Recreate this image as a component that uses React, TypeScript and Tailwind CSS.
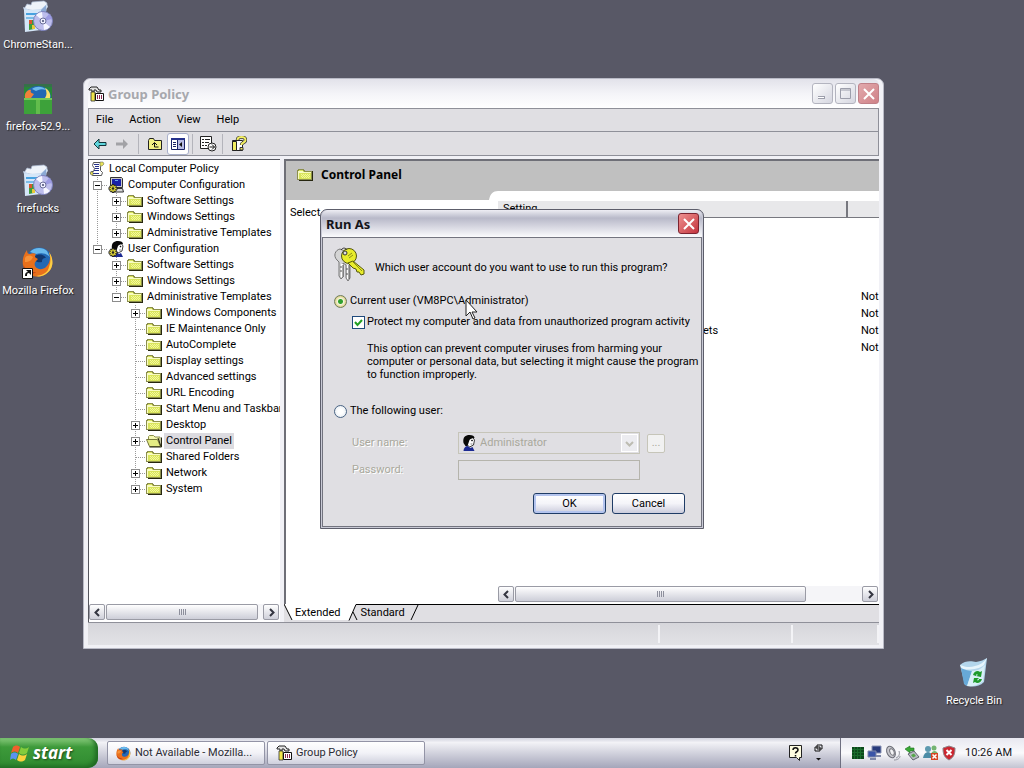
import React, { useState } from 'react';

interface TreeNode {
  label: string;
  icon: React.FC;
  selected?: boolean;
  closed?: boolean;
  children?: TreeNode[];
}

const Folder = () => (
  <svg width="16" height="16" viewBox="0 0 16 16" shapeRendering="crispEdges" className="shrink-0">
    <path d="M2 14h14V4h-1v9H2z" fill="#26260f" />
    <path d="M0 4l1-2h5l2 2h7v9H0z" fill="#8c8f4c" />
    <path d="M1 4l1-1h4l1 2h7v7H1z" fill="#d9e45c" />
    <path d="M1 4h5v1h8v1H2v6H1z" fill="#f8fbc2" />
    <path d="M4 7h1v1H4zM6 7h1v1H6zM8 7h1v1H8zM10 7h1v1h-1zM12 7h1v1h-1zM5 8h1v1H5zM7 8h1v1H7zM9 8h1v1H9zM11 8h1v1h-1zM4 9h1v1H4zM6 9h1v1H6zM8 9h1v1H8zM10 9h1v1h-1zM12 9h1v1h-1zM5 10h1v1H5zM7 10h1v1H7zM9 10h1v1H9zM11 10h1v1h-1z" fill="#f3f99a" />
  </svg>
);

const OpenFolder = () => (
  <svg width="16" height="16" viewBox="0 0 16 16" className="shrink-0">
    <path d="M2.500 12V3.500l1-1h4l1.500 1.500h5v9" fill="#f4f8b0" stroke="#8c8f4c" />
    <path d="M.500 6.500h11l3 7h-11z" fill="#e4ec84" stroke="#77793c" />
    <path d="M12 5l3 8.500M3.500 14H15.500V4.500" fill="none" stroke="#26260f" />
  </svg>
);

const Scroll = () => (
  <svg width="16" height="16" viewBox="0 0 16 16" className="shrink-0">
    <path d="M4.500 1.500h8l1 2-2 2v4l2 2-1 3h-9l-2-2 1-2h2l1-3-2-3z" fill="#fff" stroke="#555" />
    <path d="M5 3.500h5M6 5.500h4M6 7.500h4M5 9.500h5M4 12.500h6" stroke="#26328c" />
    <path d="M11 1h3l1 2-2 2h-2zM1 11h3v3H2z" fill="#e9e458" stroke="#555" strokeWidth=".5" />
  </svg>
);

const Gear = () => (
  <>
    <path d="M5 7v9M.500 11.500h9M2 8.500l6 6M8 8.500l-6 6" stroke="#222" strokeWidth="2.500" />
    <path d="M5 8v7M1.500 11.500h7M2.500 9l5 5M7.500 9l-5 5" stroke="#e5dc3a" strokeWidth="1.300" />
    <circle cx="5" cy="11.500" r="1.300" fill="#222" />
  </>
);

const Computer = () => (
  <svg width="16" height="16" viewBox="0 0 16 16" className="shrink-0">
    <path d="M2.500 .500h11l1 1v9h-12z" fill="#c8c8c8" stroke="#333" />
    <path d="M4 2h9v7H4z" fill="#1820a8" />
    <path d="M7 3h3v1H7z" fill="#6aa8f0" />
    <path d="M3.500 11.500h11l1 3.500h-11z" fill="#d8d8d8" stroke="#333" />
    <Gear />
  </svg>
);

const PersonPaths = () => (
  <>
    <path d="M7 3l6-1 2 3-1 5-4 2-3-3z" fill="#fff" stroke="#111" strokeWidth=".8" />
    <path d="M4 8C3 2 6 0 10 0c3 0 5 1 5 3-3 0-4 1-5 2L9 8l-1 3H6z" fill="#080808" />
    <path d="M4 16c0-3 2-5 4-5l3 2 2-1 2 4z" fill="#1c2a92" />
    <path d="M12 5h1v1h-1zM11 9h2" fill="#111" stroke="#111" strokeWidth=".5" />
  </>
);

const UserGear = () => (
  <svg width="16" height="16" viewBox="0 0 16 16" className="shrink-0">
    <PersonPaths />
    <Gear />
  </svg>
);

const Person = () => (
  <svg width="14" height="16" viewBox="3 0 13 16" className="shrink-0">
    <PersonPaths />
  </svg>
);

const PolicyIcon = () => (
  <svg width="16" height="16" viewBox="0 0 16 16" className="shrink-0">
    <path d="M1 3l2-2h6l2 3h2v2H9L8 4H6v2H4V4H1z" fill="#e4e4e4" stroke="#222" />
    <path d="M3 6h4v9H3z" fill="#f1e64a" stroke="#333" strokeWidth=".8" />
    <path d="M7.500 7.500h8v7h-8z" fill="#fff" stroke="#111" />
    <path d="M9.500 9v4M11.500 9v4M13.500 9v4" stroke="#8c2850" />
  </svg>
);

const Firefox = ({ size }: { size: number }) => (
  <svg width={size} height={size} viewBox="0 0 32 32" className="shrink-0">
    <circle cx="17" cy="15" r="13.500" fill="#2268b4" />
    <path d="M8 6c4-5 13-5 17-1l3 6c-5-5-10-4-14-3z" fill="#69b9ec" />
    <path d="M12 11c4-4 10-3 12 1-3 0-4 1-4 4-4 1-7 0-8-5z" fill="#12386f" />
    <path d="M27 6c5 7 5 17-3 22-9 6-21 1-23-9C0 13 2 8 5 4c0 3 1 4 3 4 2-1 4-1 6 0-2 2-1 4 2 5-3 3-4 4-3 7 2 4 8 4 11 1 4-4 5-9 3-15z" fill="#e8701c" />
    <path d="M27 6c5 7 5 17-3 22-3 2-7 3-10 2 8-1 12-4 13-9 2-5 2-10 0-15z" fill="#fbd044" />
    <path d="M3 12c2-3 5-3 8-1-1 3-4 5-8 5z" fill="#f79239" />
    <path d="M1 18c2 5 7 9 13 8-3 3-8 2-11-2z" fill="#c33e18" />
  </svg>
);

const Installer = () => (
  <svg width="32" height="34" viewBox="0 0 32 34">
    <path d="M2 9l3-5 4 1 1-3 12-1 3 2-1 8-5 1z" fill="#eef3fa" stroke="#a9b8d0" strokeWidth=".7" />
    <path d="M1 7l7 3 11-1 6-5 1 3-6 6H3z" fill="#cbdcf0" />
    <path d="M2 10h17v20L3 32z" fill="#d4e6f8" />
    <path d="M19 10l5-5v22l-5 4z" fill="#8ba9d4" />
    <path d="M4 13h12v2H4z" fill="#48a2e0" />
    <path d="M4 17h8v2H4z" fill="#7cbde8" />
    <path d="M7 20h5v9l-5 1z" fill="#3f9b3b" />
    <path d="M7 20h3v4H7z" fill="#d8562c" />
    <path d="M10 25h3v4h-3z" fill="#e8c93a" />
    <circle cx="21" cy="21" r="9.500" fill="#bdbdec" stroke="#7d82bd" />
    <path d="M21 21l-7-6a9 9 0 0 1 6-3zM21 21l7 6a9 9 0 0 1-6 3z" fill="#f5f5ff" />
    <path d="M21 21l9-2a9 9 0 0 0-3-5z" fill="#9c9ae2" />
    <circle cx="21" cy="21" r="3" fill="#eef" stroke="#6b6f99" />
    <circle cx="21" cy="21" r="1" fill="#454a70" />
  </svg>
);

const FirefoxSetup = () => (
  <svg width="30" height="34" viewBox="0 0 30 34">
    <path d="M1 2h28v30H1z" fill="#278838" />
    <path d="M1 2h28v3H1z" fill="#36704a" />
    <path d="M2 16C2 8 8 4 15 4s13 4 13 12z" fill="#2268b4" />
    <path d="M9 7c4-3 11-3 14 1-5-2-8 0-10 1z" fill="#6cbbec" />
    <path d="M2 16C1 11 5 7 8 8c-1 2 0 3 3 4l-3 4z" fill="#f0813a" />
    <path d="M22 6c4 2 6 6 5 10h-5c2-3 2-6 0-10z" fill="#fbe06a" />
    <path d="M1 16h28v16H1z" fill="#3da23a" />
    <path d="M13 18h4v14h-4z" fill="#62bd4c" />
    <path d="M1 16h28v2H1z" fill="#72c858" />
  </svg>
);

const FirefoxShortcut = () => (
  <svg width="34" height="34" viewBox="0 0 34 34">
    <svg x="1" y="0" width="32" height="32"><Firefox size={32} /></svg>
    <path d="M1.500 22.500h10v10h-10z" fill="#fff" stroke="#111" />
    <path d="M4 30c0-3 1-4 3-4l-2-2h5v5l-2-2c-2 0-2 1-2 3z" fill="#111" />
  </svg>
);

const RecycleBin = () => (
  <svg width="30" height="34" viewBox="0 0 30 34">
    <path d="M1 9C6 4 13 5 17 6c5-1 8-2 11-4l-3 24c-6 6-14 5-19 3z" fill="#b3d6ec" />
    <path d="M1 9c5 2 10 3 15 1 5-1 9-4 12-8l-3 7c-6 5-16 5-22 4z" fill="#e7f5fc" />
    <path d="M2 12c4 2 8 3 11 3L8 30l-3-2z" fill="#67a9d8" />
    <path d="M13 15c6 0 10-3 13-6l-2 16c-4 4-11 6-16 5z" fill="#d9eff8" />
    <path d="M14 19c1-4 5-5 7-3l2-1-1 6-5-1 2-1c-1-1-2-1-2 1zM23 23c-1 4-5 5-7 3l-2 1 1-5 5 0-2 2c1 1 2 0 2-1z" fill="#1f9a2c" />
  </svg>
);

const Keys = () => (
  <svg width="32" height="34" viewBox="0 0 32 34" className="shrink-0">
    <path d="M6 2C1 3-1 9 3 13l2 2v14l2 3 2-2V16l3 2v13l2 3 2-3V17c3-3 1-9-3-12z" fill="#d5d5d5" stroke="#777" />
    <path d="M8 17v13M14 18v14" stroke="#fff" strokeWidth="2" />
    <path d="M9 18v12M15 18v14M6 20h2M6 24h2M12 22h2M12 27h2" stroke="#555" />
    <circle cx="15" cy="9" r="7.500" fill="#e8ec2c" stroke="#55570f" />
    <path d="M19 14l11 9v4l-3 1-2-3-2 0-1-3-3-1-5-5z" fill="#e8ec2c" stroke="#55570f" />
    <circle cx="11" cy="6" r="2" fill="#e0dfe3" stroke="#333" />
    <path d="M18 14l10 10M14 9l4-3M15 11l4-3" stroke="#8b8e16" />
    <path d="M7 3c2-3 5-2 6 0" fill="none" stroke="#333" />
  </svg>
);

const FlagLogo = () => (
  <svg width="20" height="19" viewBox="0 0 20 19">
    <path d="M3 3c2-2 5-2 7 0L8 9C6 7 4 7 1 9z" fill="#f0602c" />
    <path d="M11 3c3 2 5 2 8 0l-2 6c-3 2-5 2-8 0z" fill="#85cc3c" />
    <path d="M1 10c2-2 5-2 7 0l-2 6c-2-2-4-2-6 0z" fill="#5b93f0" />
    <path d="M9 10c3 2 5 2 8 0l-2 6c-3 2-5 2-8 0z" fill="#fbd23c" />
  </svg>
);

const Chevron = ({ d, color = '#333540' }: { d: string; color?: string }) => (
  <svg width="9" height="9" viewBox="0 0 9 9">
    <path d={d} fill="none" stroke={color} strokeWidth="2" />
  </svg>
);

const Cross = () => (
  <svg width="14" height="14" viewBox="0 0 14 14">
    <path d="M2 2l10 10M12 2L2 12" stroke="#fff" strokeWidth="2" />
  </svg>
);

const folder = (label: string, extra: Partial<TreeNode> = {}): TreeNode => ({ label, icon: Folder, ...extra });

const tree: TreeNode[] = [
  {
    label: 'Computer Configuration',
    icon: Computer,
    children: [
      folder('Software Settings', { closed: true }),
      folder('Windows Settings', { closed: true }),
      folder('Administrative Templates', { closed: true }),
    ],
  },
  {
    label: 'User Configuration',
    icon: UserGear,
    children: [
      folder('Software Settings', { closed: true }),
      folder('Windows Settings', { closed: true }),
      folder('Administrative Templates', {
        children: [
          folder('Windows Components', { closed: true }),
          folder('IE Maintenance Only'),
          folder('AutoComplete'),
          folder('Display settings'),
          folder('Advanced settings'),
          folder('URL Encoding'),
          folder('Start Menu and Taskbar'),
          folder('Desktop', { closed: true }),
          { label: 'Control Panel', icon: OpenFolder, closed: true, selected: true },
          folder('Shared Folders'),
          folder('Network', { closed: true }),
          folder('System', { closed: true }),
        ],
      }),
    ],
  },
];

const Guide = ({ line }: { line: boolean }) => (
  <svg width="19" height="16" className="shrink-0">
    {line && <path d="M8.500 0v16" stroke="#999" strokeDasharray="1 1" />}
  </svg>
);

const Branch = ({ last, sign }: { last: boolean; sign?: '+' | '-' }) => (
  <svg width="19" height="16" className="shrink-0" shapeRendering="crispEdges">
    <path d={last ? 'M8.500 0v8M9 8.500h9' : 'M8.500 0v16M9 8.500h9'} stroke="#999" strokeDasharray="1 1" />
    {sign && <rect x="4.500" y="4.500" width="8" height="8" fill="#fff" stroke="#8c8c8c" />}
    {sign && <path d={sign === '+' ? 'M6 8.500h5M8.500 6v5' : 'M6 8.500h5'} stroke="#000" />}
  </svg>
);

const TreeRows = ({ nodes, guides }: { nodes: TreeNode[]; guides: boolean[] }) => (
  <ul>
    {nodes.map((node, i) => {
      const last = i === nodes.length - 1;
      const sign = node.children ? '-' : node.closed ? '+' : undefined;
      const Icon = node.icon;
      return (
        <li key={node.label}>
          <div className="flex h-4 items-center">
            {guides.map((line, g) => <Guide key={g} line={line} />)}
            <Branch last={last} sign={sign} />
            <Icon />
            <span className={`ml-[2px] px-[2px] leading-4 whitespace-nowrap ${node.selected ? 'bg-[#dcdbe0]' : ''}`}>
              {node.label}
            </span>
          </div>
          {node.children && <TreeRows nodes={node.children} guides={[...guides, !last]} />}
        </li>
      );
    })}
  </ul>
);

const settings = [
  { id: 'prohibit', state: 'Not' },
  { id: 'hide', state: 'Not' },
  { id: 'show', name: 'ets', state: 'Not' },
  { id: 'force', state: 'Not' },
];

const ScrollBar = ({ thumb }: { thumb: string }) => {
  const arrow = 'flex size-4 shrink-0 items-center justify-center rounded-[2px] border border-[#9a9ba5] bg-linear-to-b from-white to-[#cfd0da]';
  return (
    <div className="flex h-4 gap-px bg-[#f5f5f8]">
      <button aria-label="Scroll left" className={arrow}><Chevron d="M6 1L2.500 4.500 6 8" /></button>
      <div className="flex flex-1 pr-1">
        <div className={`flex items-center justify-center gap-px rounded-[2px] border border-[#9a9ba5] bg-linear-to-b from-white to-[#cdced8] ${thumb}`}>
          {[0, 1, 2, 3].map((n) => <span key={n} className="h-[6px] w-px bg-[#8d8f9c]" />)}
        </div>
      </div>
      <button aria-label="Scroll right" className={arrow}><Chevron d="M3 1l3.500 3.500L3 8" /></button>
    </div>
  );
};

const Toolbar = () => (
  <div className="flex h-6 items-center border-b border-[#8f9099] pl-1">
    <button aria-label="Back" className="w-[22px]">
      <svg width="14" height="12" viewBox="0 0 14 12"><path d="M1 6l5-5v3.500h7v3H6V11z" fill="#5fd5dc" stroke="#12343a" /></svg>
    </button>
    <button aria-label="Forward" className="w-[22px]">
      <svg width="14" height="12" viewBox="0 0 14 12"><path d="M13 6L8 1v3.500H1v3h7V11z" fill="#a2a2a6" /></svg>
    </button>
    <div className="mr-2 ml-px h-5 w-px bg-[#b4b4bb]" />
    <button aria-label="Up one level" className="w-5">
      <svg width="16" height="14" viewBox="0 0 16 14">
        <path d="M1.500 12.500v-9l1-2h4l1 2h7v9z" fill="#f4f283" stroke="#222" />
        <path d="M7.500 10V6M5 8l2.500-2.500L10 8M7.500 10h4" fill="none" stroke="#111" />
      </svg>
    </button>
    <button aria-label="Show or hide tree" className="flex h-[22px] w-[22px] items-center justify-center rounded-[3px] border border-[#a9b0cc] bg-white">
      <svg width="14" height="12" viewBox="0 0 14 12">
        <path d="M.500 .500h13v11H.500z" fill="#fff" stroke="#1a2266" />
        <path d="M0 0h14v2H0z" fill="#26328c" />
        <path d="M7 2h6v9H7z" fill="#b8bce4" />
        <path d="M6.500 2v10M2 4.500h3M2 6.500h3M2 8.500h3" stroke="#1a2266" />
        <path d="M11 4v5L8 6.500z" fill="#111" />
      </svg>
    </button>
    <div className="mx-[3px] h-5 w-px bg-[#b4b4bb]" />
    <button aria-label="Export list" className="ml-1 w-[22px]">
      <svg width="17" height="16" viewBox="0 0 17 16">
        <path d="M.500 .500h11v12H.500z" fill="#fff" stroke="#222" />
        <path d="M2 3.500h2M5 3.500h5M2 6.500h2M5 6.500h4M2 9.500h2M5 9.500h2" stroke="#222" />
        <circle cx="12" cy="11" r="4" fill="#fff" stroke="#222" />
        <path d="M9.500 11h5M12 8.500l2.500 2.500L12 13.500" fill="none" stroke="#111" />
      </svg>
    </button>
    <div className="mr-2 h-5 w-px bg-[#b4b4bb]" />
    <button aria-label="Help" className="w-[22px]">
      <svg width="16" height="16" viewBox="0 0 16 16">
        <path d="M1.500 4.500h10v10h-10z" fill="#fff" stroke="#222" />
        <path d="M1.500 5.500h4v9h-4z" fill="#f2ee62" stroke="#222" />
        <path d="M6.500 4c0-4 8-4 8 0 0 3-4 2-4 5" fill="none" stroke="#333" strokeWidth="3.500" />
        <path d="M6.500 4c0-4 8-4 8 0 0 3-4 2-4 5" fill="none" stroke="#f2ee62" strokeWidth="2" />
        <path d="M9 11.500h3v2.500H9z" fill="#f2ee62" stroke="#333" />
      </svg>
    </button>
  </div>
);

const GroupPolicyWindow = () => {
  const titleButton = 'flex size-[21px] items-center justify-center rounded-[3px] border border-[#b3b4bf] bg-linear-to-br from-white to-[#d5d6e0]';
  return (
    <section className="absolute top-[78px] left-[83px] flex h-[571px] w-[801px] flex-col rounded-t-[7px] border border-[#b9bac6] bg-[#f1f1f6] px-1 pb-[3px]">
      <header className="flex h-[29px] shrink-0 items-center gap-1 rounded-t-[6px] bg-linear-to-b from-[#e2e2ea] via-[#f4f4f8] to-white">
        <PolicyIcon />
        <h1 className="font-['Noto_Sans',sans-serif] text-[13px] font-bold text-[#a7a8ad]">Group Policy</h1>
        <div className="ml-auto flex gap-[2px]">
          <button aria-label="Minimize" className={titleButton}>
            <svg width="13" height="13"><path d="M2 10.500h7" stroke="#9c9eab" strokeWidth="3" /><path d="M2 10.500h6" stroke="#fff" /></svg>
          </button>
          <button aria-label="Maximize" className={titleButton}>
            <svg width="13" height="13"><path d="M1.500 1.500h10v10h-10zM1 3h11" fill="none" stroke="#9c9eab" /></svg>
          </button>
          <button aria-label="Close" className="flex size-[21px] items-center justify-center rounded-[3px] border border-[#c08088] bg-linear-to-br from-[#e2a9ad] to-[#cf8288]"><Cross /></button>
        </div>
      </header>

      <div className="shrink-0 border border-b-0 border-[#8f9099] bg-[#e0dfe3]">
        <nav className="flex h-[23px] items-center gap-4 border-b border-[#8f9099] pl-[7px]">
          {['File', 'Action', 'View', 'Help'].map((m) => <button key={m}>{m}</button>)}
        </nav>
        <Toolbar />
      </div>

      <div className="mt-[3px] flex min-h-0 flex-1 gap-1 border-b border-[#8f9099] bg-[#f1f1f6]">
        <div className="flex w-48 shrink-0 flex-col overflow-hidden border-t border-l border-[#55565e] bg-white pt-px">
          <div className="flex h-4 items-center">
            <Scroll />
            <span className="ml-[2px] px-[2px] leading-4">Local Computer Policy</span>
          </div>
          <TreeRows nodes={tree} guides={[]} />
          <div className="mt-auto pr-px pb-[2px]">
            <ScrollBar thumb="flex-1" />
          </div>
        </div>

        <div className="flex min-w-0 flex-1 flex-col bg-[#e0dfe3]">
          <div className="flex min-h-0 flex-1 flex-col border-t-2 border-l-2 border-[#6e6f77] bg-white">
            <div className="flex h-[30px] shrink-0 items-center gap-2 bg-[#c0c0c0] pb-[2px] pl-[11px]">
              <Folder />
              <h2 className="font-['Noto_Sans',sans-serif] text-[12px] font-bold">Control Panel</h2>
            </div>
            <div className="flex min-h-0 flex-1">
              <div className="w-[212px] shrink-0">
                <svg width="212" height="10" className="block">
                  <path d="M0 0h212c-5 0-8 3-9 9H0z" fill="#c0c0c0" />
                </svg>
                <p className="pt-1 pl-1 leading-4">Select</p>
              </div>
              <div className="flex min-w-0 flex-1 flex-col overflow-hidden pt-[10px]">
                <table className="w-full table-fixed text-left">
                  <thead>
                    <tr className="h-4 border-b border-[#77787f] bg-[#e8e8ea]">
                      <th className="w-[349px] border-r-2 border-[#77787f] pl-[5px] leading-4 font-normal">Setting</th>
                      <th aria-label="State" />
                    </tr>
                  </thead>
                  <tbody>
                    <tr aria-hidden="true" className="h-[70px]" />
                    {settings.map((s) => (
                      <tr key={s.id} className="h-[17px]">
                        <td className="pl-[205px] leading-[17px]">{s.name}</td>
                        <td className="pl-[14px] leading-[17px]">{s.state}</td>
                      </tr>
                    ))}
                  </tbody>
                </table>
                <div className="mt-auto pr-px pb-[2px]">
                  <ScrollBar thumb="w-[85%]" />
                </div>
              </div>
            </div>
          </div>
          <div className="flex h-[18px] shrink-0">
            <div className="grid h-[17px] w-[136px]">
              <svg width="136" height="17" className="col-start-1 row-start-1">
                <path d="M0 0h72l-7 16H8z" fill="#fff" />
                <path d="M0 0l8 16M72 .500l-7 16M69 8l4 8M72 .500h64M134 1l-7 15" fill="none" stroke="#000" />
              </svg>
              <div className="col-start-1 row-start-1 flex items-center gap-5 pt-px pl-[11px]">
                <button>Extended</button>
                <button>Standard</button>
              </div>
            </div>
            <div className="flex-1 border-t border-black" />
          </div>
        </div>
      </div>

      <footer className="flex h-[22px] shrink-0 bg-linear-to-b from-[#d6d6db] to-[#e2e2e6] py-[2px]">
        <div className="flex-1 border-r-2 border-[#f3f3f6]" />
        <div className="w-[133px] border-r-2 border-[#f3f3f6]" />
        <div className="w-[86px] border-r-2 border-[#f3f3f6]" />
      </footer>
    </section>
  );
};

const RunAsDialog = () => {
  const [account, setAccount] = useState('current');
  const [protect, setProtect] = useState(true);
  const radio = 'size-[13px] shrink-0 appearance-none rounded-full border border-[#4a6484] bg-[radial-gradient(circle,#ffffff_30%,#dfe6ee)] checked:border-[#6e7d5a] checked:bg-[radial-gradient(circle,#2fa02f_2px,#f4f5dc_3px,#d9c878_6px)]';
  const button = 'h-[21px] w-[73px] rounded-[3px] border border-[#1f3c66] bg-linear-to-b from-white via-[#f4f4f9] to-[#cbccdc]';
  return (
    <section role="dialog" aria-labelledby="run-as-title" className="absolute top-[209px] left-[320px] flex h-[320px] w-[384px] flex-col rounded-t-[7px] border border-[#5d5e6b] bg-[#c9cad6] px-px pb-px">
      <header className="flex h-[27px] shrink-0 items-center justify-between rounded-t-[6px] bg-linear-to-b from-[#eeeef4] via-[#b8b9c9] via-30% to-[#fbfbfd] pr-[3px] pl-1">
        <h2 id="run-as-title" className="font-['Noto_Sans',sans-serif] text-[13px] font-bold text-[#15151a]">Run As</h2>
        <button aria-label="Close" className="flex size-[21px] items-center justify-center rounded-[3px] border border-[#7c2430] bg-linear-to-br from-[#ee8f90] to-[#c2303e]"><Cross /></button>
      </header>
      <div className="flex-1 border border-[#73747f] bg-[#e0dfe3] pt-[9px] pl-[11px]">
        <div className="flex items-center gap-[9px]">
          <Keys />
          <p className="pt-[7px] leading-4">Which user account do you want to use to run this program?</p>
        </div>

        <label className="mt-3 flex h-4 items-center gap-[3px]">
          <input type="radio" name="account" checked={account === 'current'} onChange={() => setAccount('current')} className={radio} />
          Current user (VM8PC\Administrator)
        </label>
        <label className="mt-[5px] flex h-4 items-center gap-[2px] pl-[18px]">
          <span className="grid">
            <input type="checkbox" checked={protect} onChange={() => setProtect(!protect)} className="col-start-1 row-start-1 size-[13px] appearance-none border border-[#1f4a7c] bg-white" />
            <svg width="13" height="13" className="pointer-events-none col-start-1 row-start-1">
              {protect && <path d="M3 6l2.500 3L10 4" fill="none" stroke="#23a023" strokeWidth="2" />}
            </svg>
          </span>
          Protect my computer and data from unauthorized program activity
        </label>
        <p className="mt-3 pl-[33px] leading-[13px] whitespace-nowrap">
          This option can prevent computer viruses from harming your<br />
          computer or personal data, but selecting it might cause the program<br />
          to function improperly.
        </p>

        <label className="mt-[22px] flex h-4 items-center gap-[3px]">
          <input type="radio" name="account" checked={account === 'other'} onChange={() => setAccount('other')} className={radio} />
          The following user:
        </label>
        <div className="mt-[13px] flex h-[22px] items-center pl-[18px] text-[#a9a89c]">
          <label htmlFor="user-name" className="w-[106px] [text-shadow:1px_1px_0_#fff]">User name:</label>
          <div className="flex h-[22px] w-[182px] items-center border border-[#c6c5b9] pr-px pl-[3px]">
            <Person />
            <select id="user-name" disabled className="ml-1 min-w-0 flex-1 appearance-none opacity-100">
              <option>Administrator</option>
            </select>
            <span className="flex h-[18px] w-[17px] items-center justify-center border border-white bg-[#ececf0]"><Chevron d="M1 3l3.500 3.500L8 3" color="#bdbcb2" /></span>
          </div>
          <button disabled aria-label="Browse users" className="ml-[7px] h-[19px] w-[18px] rounded-[2px] border border-[#c6c5b9] bg-[#f1f1f1] leading-3">...</button>
        </div>
        <div className="mt-[6px] flex h-5 items-center pl-[18px] text-[#a9a89c]">
          <label htmlFor="password" className="w-[106px] [text-shadow:1px_1px_0_#fff]">Password:</label>
          <input id="password" type="password" disabled className="h-5 w-[182px] border border-[#b5b4ac] bg-[#e0dfe3]" />
        </div>
        <div className="mt-[13px] flex justify-end gap-[6px] pr-4">
          <button className={`${button} shadow-[inset_0_0_0_2px_#b4c4ee]`}>OK</button>
          <button className={button}>Cancel</button>
        </div>
      </div>
    </section>
  );
};

const Shortcut = ({ label, children }: { label: string; children: React.ReactNode }) => (
  <button className="flex h-[82px] w-[76px] flex-col items-center gap-[3px] text-white [text-shadow:1px_1px_1px_#222]">
    {children}
    <span className="leading-4 whitespace-nowrap">{label}</span>
  </button>
);

const Tray = () => (
  <div className="flex h-full items-center gap-[3px] border-l border-[#6e6f80] bg-linear-to-b from-[#e8e8f0] via-[#fafafc] to-[#c3c4d2] pr-3 pl-[11px]">
    <svg width="12" height="12" shapeRendering="crispEdges">
      <path d="M0 0h12v12H0z" fill="#0d4a1c" />
      <path d="M0 2.500h12M0 5.500h12M0 8.500h12M2.500 0v12M5.500 0v12M8.500 0v12" stroke="#1a6c2c" />
    </svg>
    <svg width="15" height="16" viewBox="0 0 15 16">
      <path d="M5 1h9v7H5z" fill="#273a7c" stroke="#8a93b4" />
      <path d="M1 6h8v6H1z" fill="#3a55a8" stroke="#7f88a8" />
      <path d="M3 14h6M9 11h5" stroke="#7f88a8" strokeWidth="2" />
    </svg>
    <svg width="16" height="16" viewBox="0 0 16 16">
      <ellipse cx="6" cy="7" rx="4" ry="6" transform="rotate(-25 6 7)" fill="#c8c8ce" stroke="#6c6e78" />
      <ellipse cx="7" cy="7" rx="2" ry="3.500" transform="rotate(-25 7 7)" fill="#f3f3f5" stroke="#77787f" />
      <path d="M11 13c3-1 4-4 3-7M9 15c4 0 6-2 6-4" fill="none" stroke="#8e909a" />
    </svg>
    <svg width="16" height="16" viewBox="0 0 16 16">
      <path d="M1 4l5-3v2h4v3H6v2z" fill="#3aa935" stroke="#1c7020" strokeWidth=".6" />
      <path d="M4 9l6-3 5 6-6 3z" fill="#b9bcc4" stroke="#62656f" />
      <path d="M7 10l3-1.500 2 2.500-3 1.500z" fill="#55a64a" />
    </svg>
    <svg width="16" height="16" viewBox="0 0 16 16">
      <circle cx="5" cy="4" r="3" fill="#5e9ab0" />
      <path d="M0 13c1-8 9-8 10 0z" fill="#4c8ca6" />
      <circle cx="11" cy="3" r="2.500" fill="#74b472" />
      <path d="M8 9c1-4 6-4 7 0z" fill="#74b472" />
      <path d="M8 8h7v7H8z" fill="#d64524" />
      <path d="M9.500 9.500l4 4M13.500 9.500l-4 4" stroke="#fff" strokeWidth="1.500" />
    </svg>
    <svg width="14" height="16" viewBox="0 0 14 16">
      <path d="M7 1l6 2c0 6-1 9-6 12C2 12 1 9 1 3z" fill="#cc2630" stroke="#8e8388" />
      <path d="M4.500 5l5 5M9.500 5l-5 5" stroke="#fff" strokeWidth="2" />
    </svg>
    <time className="ml-[6px] text-[#15151a]">10:26 AM</time>
  </div>
);

const Taskbar = () => {
  const task = 'flex h-6 w-[158px] items-center gap-1 rounded-[2px] border border-[#9394a6] bg-linear-to-b from-white via-[#f2f2f7] to-[#cfd0dd] pl-2 text-[#2c2c34]';
  return (
    <footer className="flex h-[30px] shrink-0 items-center bg-linear-to-b from-[#d2d3df] via-[#f2f2f6] via-15% to-[#a5a6ba]">
      <button className="flex h-full w-[98px] items-center gap-[3px] rounded-r-[10px] bg-linear-to-b from-[#87cb7c] via-[#3d9a3a] via-30% to-[#2f8a30] pl-[10px] shadow-[inset_-3px_-2px_4px_#1f6a22]">
        <FlagLogo />
        <span className="font-['Open_Sans',sans-serif] text-[17px] leading-5 font-bold text-white italic [text-shadow:1px_1px_2px_#1b4a1b]">start</span>
      </button>
      <div className="ml-[9px] flex flex-1 gap-[2px]">
        <button className={task}><Firefox size={15} /> Not Available - Mozilla...</button>
        <button className={task}><PolicyIcon /> Group Policy</button>
      </div>
      <div className="mr-[17px] flex items-center gap-[11px]">
        <svg width="14" height="16" viewBox="0 0 14 16">
          <path d="M.500 .500h12v12h-2v3l-3-3h-7z" fill="#fffde0" stroke="#222" />
          <path d="M4 5c0-3 5-3 5 0 0 2-2.500 1.500-2.500 3.500M6.500 10v1.500" fill="none" stroke="#111" strokeWidth="1.500" />
        </svg>
        <svg width="9" height="18" viewBox="0 0 9 18">
          <path d="M3 1h5v4H3zM1 3h5v4H1z" fill="#e8e8ee" stroke="#111" />
          <path d="M2 14h5l-2.500 2.500z" fill="#111" />
        </svg>
      </div>
      <Tray />
    </footer>
  );
};

const App: React.FC = () => (
  <div className="flex h-screen flex-col overflow-hidden bg-[#585866] font-['Roboto',sans-serif] text-[11px] leading-4 text-black">
    <main className="relative min-h-0 flex-1">
      <div className="flex flex-col">
        <Shortcut label="ChromeStan..."><Installer /></Shortcut>
        <Shortcut label="firefox-52.9..."><FirefoxSetup /></Shortcut>
        <Shortcut label="firefucks"><Installer /></Shortcut>
        <Shortcut label="Mozilla Firefox"><FirefoxShortcut /></Shortcut>
      </div>
      <div className="absolute right-3 bottom-0">
        <Shortcut label="Recycle Bin"><RecycleBin /></Shortcut>
      </div>
      <GroupPolicyWindow />
      <RunAsDialog />
      <svg width="13" height="21" viewBox="0 0 13 21" className="pointer-events-none absolute top-[299px] left-[465px]">
        <path d="M1 1v16l4-4 3 7 2-1-3-6h5z" fill="#fff" stroke="#222" />
      </svg>
    </main>
    <Taskbar />
  </div>
);

export default App;
